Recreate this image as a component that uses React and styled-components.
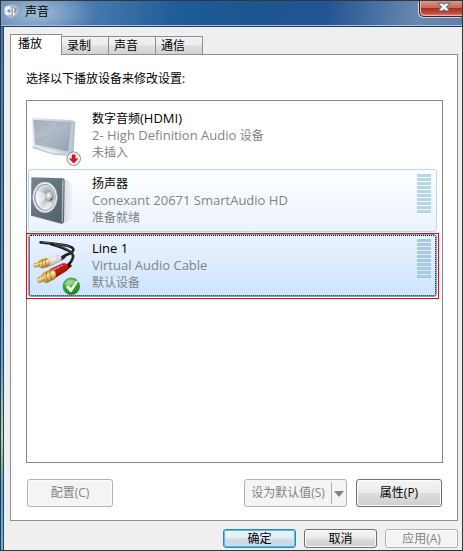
import React, { useState } from "react";
import styled, { createGlobalStyle, css } from "styled-components";

const GlobalStyle = createGlobalStyle`
  * { box-sizing: border-box; }
  body { margin: 0; background: #efefef; }
  button { font: inherit; padding: 0; margin: 0; }
`;

const Window = styled.div`
  display: flex;
  flex-direction: column;
  min-height: 100vh;
  border: 1px solid #363638;
  background: #efefef;
  color: #000;
  font-family: "Open Sans", "Noto Sans CJK SC", sans-serif;
  font-size: 12px;
  line-height: 16px;
`;

const TitleBar = styled.header`
  display: flex;
  justify-content: space-between;
  align-items: flex-start;
  height: 26px;
  border-bottom: 1px solid #1c3b66;
  box-shadow: inset 0 -1px 0 #a9c2df;
  background:
    radial-gradient(ellipse 58px 26px at 36px 12px, rgba(190, 208, 226, 0.75), rgba(160, 188, 215, 0.4) 60%, transparent),
    linear-gradient(100deg, #5d88b5 0%, #477aae 20%, #1f5c98 38%, #1b5590 55%, #205493 70%, #5478a8 84%, #6a88b0 90%, #5f80ac 100%);
`;

const Caption = styled.h1`
  display: flex;
  align-items: center;
  gap: 6px;
  height: 22px;
  margin: 0;
  padding-left: 2px;
  font-size: 12px;
  font-weight: 400;
`;

const CloseButton = styled.button`
  display: flex;
  align-items: center;
  justify-content: center;
  width: 43px;
  height: 16px;
  padding-left: 6px;
  padding-bottom: 3px;
  border: 1px solid #4a1d24;
  border-top: 0;
  border-right: 0;
  border-radius: 0 0 0 5px;
  background: linear-gradient(#d69a90 0, #c5675a 45%, #b02c1d 50%, #c24a38 80%, #e08a76 100%);
  box-shadow: inset 1px -1px 0 #e8b4a8, -1px 1px 0 #c8d2e2;
`;

const Frame = styled.div`
  display: flex;
  flex: 1;
  flex-direction: column;
  padding: 7px 4px 2px 6px;
  border-left: 1px solid #23415c;
  margin-left: 2px;
`;

const Body = styled.div`
  display: flex;
  flex: 1;
  flex-direction: column;
  background: linear-gradient(#3f7db4 0, #4f90c8 40%, #5ba5dc 64%, #b6d6b4 78%, #8ec58c 82%, #5ba5dc 88%, #63b4e8 100%) left / 2px 100% no-repeat;
`;

const TabList = styled.div`
  display: flex;
  align-items: flex-end;
`;

const Tab = styled.button`
  width: 47px;
  height: 18px;
  padding-left: 5px;
  border: 1px solid #8b8d97;
  border-bottom: 0;
  border-left-width: ${(p) => (p.$joined ? 0 : 1)}px;
  background: linear-gradient(#f3f3f3 0, #ececec 48%, #dedede 52%, #d2d2d2 100%);
  color: #000;
  text-align: left;
  line-height: 18px;
  ${(p) =>
    p.$active &&
    css`
      width: 52px;
      height: 21px;
      margin-bottom: -1px;
      padding-left: 7px;
      padding-bottom: 3px;
      border-left-width: 1px;
      background: #fff;
      z-index: 1;
    `}
`;

const Panel = styled.section`
  display: flex;
  flex: 1;
  flex-direction: column;
  padding: 16px 14px 13px 15px;
  border: 1px solid #8b8d97;
  background: #fff;
`;

const Prompt = styled.p`
  margin: 0 0 13px;
`;

const DeviceList = styled.ul`
  display: flex;
  flex: 1;
  flex-direction: column;
  gap: 2px;
  margin: 0;
  padding: 3px 5px 3px 1px;
  border: 1px solid #828790;
  list-style: none;
`;

const Device = styled.li`
  position: relative;
  display: flex;
  height: 63px;
  padding: 4px 5px 0 1px;
  border: 1px solid transparent;
  border-radius: 3px;
  cursor: default;
  ${(p) =>
    p.$look === "hover" &&
    css`
      border-color: #b8d6fb;
      background: linear-gradient(#fdfeff, #ebf3fd);
    `}
  ${(p) =>
    p.$look === "selected" &&
    css`
      border-color: #7da2ce;
      background: linear-gradient(#ebf3fe, #cde4fe);
      outline: 1px dotted #000;
      outline-offset: -2px;
      &::after {
        content: "";
        position: absolute;
        inset: -2px -3px -3px -3px;
        border: 1px solid #f00;
        pointer-events: none;
      }
    `}
`;

const DeviceIcon = styled.svg`
  flex: none;
  width: 54px;
  height: 57px;
`;

const DeviceText = styled.div`
  flex: 1;
  padding: 1px 0 0 8px;
  line-height: 17px;
  color: #838383;
`;

const DeviceName = styled.div`
  color: #000;
`;

const Latin = styled.span`
  font-size: 13px;
`;

const Meter = styled.div`
  display: flex;
  flex-direction: column;
  gap: 1px;
  width: 14px;
`;

const MeterBar = styled.span`
  height: 3px;
  background: ${(p) => (p.$deep ? "#a6cbdf" : "#b5d7e4")};
`;

const Actions = styled.div`
  display: flex;
  gap: 9px;
  margin-top: 16px;
  padding-right: 1px;
  padding-left: 1px;
`;

const buttonFace = css`
  border: 1px solid #707070;
  border-radius: 3px;
  background: linear-gradient(#f3f3f3 0, #ebebeb 48%, #dddddd 52%, #cfcfcf 100%);
  box-shadow: inset 0 0 0 1px #fbfbfb;
  color: #000;
  &:disabled {
    border-color: #adb2b5;
    background: #f4f4f4;
    color: #838383;
  }
`;

const ActionButton = styled.button`
  ${buttonFace}
  width: 86px;
  height: 28px;
  margin-right: ${(p) => (p.$pushes ? "auto" : 0)};
`;

const SplitButton = styled.div`
  display: flex;
  width: 103px;
  height: 28px;
  border: 1px solid #adb2b5;
  border-radius: 3px;
  background: #f4f4f4;
`;

const SplitPart = styled.button`
  flex: ${(p) => (p.$arrow ? "none" : 1)};
  width: ${(p) => (p.$arrow ? 15 : 0)}px;
  margin: 2px 0;
  border: 0;
  border-left: ${(p) => (p.$arrow ? "1px solid #adb2b5" : "0")};
  background: transparent;
  color: #838383;
  white-space: nowrap;
`;

const Footer = styled.footer`
  display: flex;
  justify-content: flex-end;
  gap: 8px;
  padding-top: 8px;
`;

const FooterButton = styled.button`
  ${buttonFace}
  width: 73px;
  height: 19px;
  line-height: 17px;
  ${(p) =>
    p.$primary &&
    css`
      border-color: #3c7fb1;
      background: linear-gradient(#eef5f9 0, #e2edf3 48%, #d0dde5 52%, #c8d8e2 100%);
      box-shadow: inset 0 0 0 1px #3fc8f4;
    `}
`;

const MonitorIcon = () => (
  <DeviceIcon viewBox="30 42 162 171" aria-hidden="true">
    <defs>
      <linearGradient id="screen" x1="0" y1="0" x2="1" y2="1">
        <stop offset="0" stopColor="#94a2b1" />
        <stop offset=".5" stopColor="#adb9c6" />
        <stop offset="1" stopColor="#93a2b2" />
      </linearGradient>
      <linearGradient id="bezel" x1="0" y1="0" x2="1" y2="0">
        <stop offset="0" stopColor="#e8eef1" />
        <stop offset="1" stopColor="#bdc8cf" />
      </linearGradient>
    </defs>
    <path d="M38 154l42-7 62 27-2 8-34-2-68-20z" fill="#dfe7ea" />
    <path d="M38 154l58 20 46 1v7l-40-2-64-20z" fill="#c4ced4" />
    <path d="M64 150l34 6v16l-38-12z" fill="#edf2f4" />
    <path d="M154 76l12 4-5 92-12 5z" fill="#b4c1c8" />
    <path d="M36 72q0-3 4-3l115 7q6 0 5 7l-8 91q-1 4-6 3L44 154q-4 0-4-5z" fill="url(#bezel)" stroke="#c9d3d8" />
    <path d="M41 75l111 8-8 85-98-20z" fill="url(#screen)" stroke="#8795a3" />
    <path d="M42 76l70 5q-15 45-67 50z" fill="#fff" opacity=".13" />
    <circle cx="161" cy="191" r="20" fill="#f5f5f5" stroke="#777" strokeWidth="3" />
    <circle cx="161" cy="191" r="17" fill="#e8e8e8" stroke="#fff" strokeWidth="2" />
    <path d="M156 179h10v12h8l-13 14-13-14h8z" fill="#d31820" stroke="#a90f18" />
  </DeviceIcon>
);

const SpeakerIcon = () => (
  <DeviceIcon viewBox="30 27 162 171" aria-hidden="true">
    <defs>
      <linearGradient id="box" x1="0" y1="0" x2="1" y2="1">
        <stop offset="0" stopColor="#77858e" />
        <stop offset="1" stopColor="#4d5c66" />
      </linearGradient>
      <linearGradient id="side" x1="0" y1="0" x2="1" y2="0">
        <stop offset="0" stopColor="#c4cdd3" />
        <stop offset="1" stopColor="#f7f9fb" />
      </linearGradient>
      <radialGradient id="cone" cx=".65" cy=".4" r=".75">
        <stop offset="0" stopColor="#8d969c" />
        <stop offset=".45" stopColor="#c6ccd0" />
        <stop offset="1" stopColor="#f2f4f5" />
      </radialGradient>
      <radialGradient id="cap" cx=".35" cy=".35" r=".7">
        <stop offset="0" stopColor="#fff" />
        <stop offset="1" stopColor="#838d94" />
      </radialGradient>
    </defs>
    <path d="M124 39l27 13q3 2 3 6v100q0 4-4 6l-26 13z" fill="url(#side)" stroke="#cbd5dc" />
    <path d="M134 55q13 50 2 112M145 60q8 50 0 98" fill="none" stroke="#dfe6ea" strokeWidth="3" />
    <path d="M34 37l92 3q8 0 8 7l-2 122q0 8-8 7l-91-24z" fill="url(#box)" />
    <path d="M126 43q5 1 5 6l-2 120q0 4-4 4z" fill="#a5b0b7" />
    <ellipse cx="75" cy="97" rx="37" ry="46" fill="#eef1f3" stroke="#aab3b9" strokeWidth="2" />
    <ellipse cx="75" cy="97" rx="32" ry="40" fill="#848f97" />
    <ellipse cx="76" cy="97" rx="29" ry="37" fill="url(#cone)" stroke="#dfe3e5" strokeWidth="2" />
    <path d="M85 92L50 76q-7 28 5 45z" fill="#fff" opacity=".55" />
    <path d="M88 98L72 133q14 2 24-12z" fill="#fff" opacity=".45" />
    <ellipse cx="89" cy="95" rx="12" ry="15" fill="url(#cap)" stroke="#78838b" />
    <circle cx="94" cy="103" r="3" fill="#4f5b63" />
    <path d="M34 153l89 25" stroke="#dbe0e4" strokeWidth="2" />
  </DeviceIcon>
);

const CableIcon = () => (
  <DeviceIcon viewBox="30 27 162 171" aria-hidden="true">
    <defs>
      <linearGradient id="gold" x1="0" y1="0" x2=".5" y2="1">
        <stop offset="0" stopColor="#f4d377" />
        <stop offset=".35" stopColor="#dba337" />
        <stop offset=".5" stopColor="#fff0ad" />
        <stop offset="1" stopColor="#a2690d" />
      </linearGradient>
      <linearGradient id="red" x1="0" y1="0" x2=".4" y2="1">
        <stop offset="0" stopColor="#f27769" />
        <stop offset=".4" stopColor="#cf1f18" />
        <stop offset="1" stopColor="#8f0907" />
      </linearGradient>
      <linearGradient id="white" x1="0" y1="0" x2=".3" y2="1">
        <stop offset="0" stopColor="#fff" />
        <stop offset=".5" stopColor="#e5e7ec" />
        <stop offset="1" stopColor="#9fa4ae" />
      </linearGradient>
      <radialGradient id="ok" cx=".4" cy=".25" r=".8">
        <stop offset="0" stopColor="#79d36a" />
        <stop offset=".6" stopColor="#32a52d" />
        <stop offset="1" stopColor="#137414" />
      </radialGradient>
    </defs>
    <path d="M62 37Q98 40 136 46q26 5 24 14-2 8-22 15l-10 6" fill="none" stroke="#202124" strokeWidth="8" strokeLinecap="round" />
    <path d="M66 36q46 3 84 14" fill="none" stroke="#777b80" strokeWidth="2" />
    <path d="M94 43q44 12 60 25 14 14-9 36" fill="none" stroke="#1b1b1e" strokeWidth="8" strokeLinecap="round" />
    <path d="M104 44q38 10 54 27 8 9-3 22" fill="none" stroke="#64666b" strokeWidth="2" />
    <path d="M117 84l15-9 5 8-16 11z" fill="#26262a" />
    <path d="M80 86l32-10q9-1 12 7 2 8-5 12L88 110q-11-7-8-24z" fill="url(#white)" stroke="#9297a1" />
    <path d="M108 78l7 18M114 77l7 16" stroke="#b8bcc4" strokeWidth="2" />
    <path d="M59 91l17-6q9-1 13 9 3 11-5 16l-17 5q-9 0-12-8-2-11 4-16z" fill="url(#gold)" stroke="#a37322" />
    <path d="M42 101l15-5 4 11-14 5q-6 0-7-4 0-5 2-7z" fill="url(#gold)" stroke="#a37322" />
    <path d="M68 89q-5 12 3 25M77 87q-5 11 3 23" fill="none" stroke="#8d5c16" strokeWidth="2" />
    <path d="M137 108l12-9 7 9-14 11z" fill="#3c0907" />
    <path d="M91 117l38-17q10-2 15 7 3 10-5 16l-39 24q-15-8-9-30z" fill="url(#red)" stroke="#82120e" />
    <path d="M99 120l30-14" stroke="#ffb1a6" strokeWidth="3" />
    <path d="M120 105l10 20M128 102l10 19" stroke="#8d100c" strokeWidth="2" />
    <path d="M71 128l21-10q10-1 15 11 3 13-5 19l-22 11q-11-1-15-12-2-12 6-19z" fill="url(#gold)" stroke="#9a6715" />
    <path d="M54 143l16-7 6 14-16 8q-6 0-8-6 0-7 2-9z" fill="url(#gold)" stroke="#9a6715" />
    <path d="M80 125q-6 14 5 31M91 119q-5 14 5 31" fill="none" stroke="#81520c" strokeWidth="2" />
    <circle cx="154" cy="169" r="25" fill="url(#ok)" stroke="#2c8a2b" strokeWidth="2" />
    <path d="M135 158q15-16 38-3-17 10-39 10z" fill="#fff" opacity=".3" />
    <path d="M138 170l6-5 9 9 15-21 9-2-23 36q-4 0-6-4z" fill="#fff" />
  </DeviceIcon>
);

const SoundGlyph = () => (
  <svg width="16" height="16" viewBox="9 10 48 48" aria-hidden="true">
    <path d="M13 20l11-8 22 1 10 10-2 16-17 14-13-2-11-15z" fill="#b5bec7" />
    <ellipse cx="24" cy="30" rx="12" ry="16" fill="#e5eaee" stroke="#8c969f" strokeWidth="2" />
    <path d="M15 21l13 10-10 10M29 17l-5 15 10 8" fill="none" stroke="#fff" strokeWidth="4" />
    <circle cx="27" cy="31" r="5" fill="#8995a1" />
    <path d="M38 18l13 7-8 10 5 6-10 9z" fill="#f4f6f7" stroke="#8c969f" strokeWidth="2" />
    <path d="M42 23l6 4-6 7" fill="none" stroke="#59636e" strokeWidth="3" />
  </svg>
);

const CloseGlyph = () => (
  <svg width="12" height="10" viewBox="0 0 12 10" aria-hidden="true">
    <path d="M1 1h3.5L6 2.6 7.500 1H11v1.400L8.400 5 11 7.600V9H7.500L6 7.400 4.500 9H1V7.600L3.600 5 1 2.400z" fill="#f7f7f7" stroke="#4e5467" />
  </svg>
);

const tabs = ["播放", "录制", "声音", "通信"];

const devices = [
  { name: <>数字音频<Latin>(HDMI)</Latin></>, detail: <><Latin>2- High Definition Audio </Latin>设备</>, status: "未插入", Icon: MonitorIcon, look: "plain" },
  { name: "扬声器", detail: <Latin>Conexant 20671 SmartAudio HD</Latin>, status: "准备就绪", Icon: SpeakerIcon, look: "hover", meter: true },
  { name: <Latin>Line 1</Latin>, detail: <Latin>Virtual Audio Cable</Latin>, status: "默认设备", Icon: CableIcon, look: "selected", meter: true },
];

const LevelMeter = ({ deep }) => (
  <Meter>
    {Array.from({ length: 10 }, (_, i) => (
      <MeterBar key={i} $deep={deep} />
    ))}
  </Meter>
);

export default function App() {
  const [active, setActive] = useState(0);
  return (
    <>
      <GlobalStyle />
      <Window>
        <TitleBar>
          <Caption>
            <SoundGlyph />
            声音
          </Caption>
          <CloseButton aria-label="关闭">
            <CloseGlyph />
          </CloseButton>
        </TitleBar>
        <Body>
          <Frame>
            <TabList role="tablist">
              {tabs.map((label, i) => (
                <Tab key={label} role="tab" aria-selected={i === active} $active={i === active} $joined={i > 0} onClick={() => setActive(i)}>
                  {label}
                </Tab>
              ))}
            </TabList>
            <Panel role="tabpanel">
              <Prompt>选择以下播放设备来修改设置:</Prompt>
              <DeviceList>
                {devices.map(({ name, detail, status, Icon, look, meter }) => (
                  <Device key={status} $look={look}>
                    <Icon />
                    <DeviceText>
                      <DeviceName>{name}</DeviceName>
                      <div>{detail}</div>
                      <div>{status}</div>
                    </DeviceText>
                    {meter && <LevelMeter deep={look === "selected"} />}
                  </Device>
                ))}
              </DeviceList>
              <Actions>
                <ActionButton disabled $pushes>配置(C)</ActionButton>
                <SplitButton>
                  <SplitPart disabled>设为默认值(S)</SplitPart>
                  <SplitPart disabled $arrow aria-label="更多">
                    <svg width="10" height="6" viewBox="0 0 10 6" aria-hidden="true">
                      <path d="M0 0h10L5 6z" fill="#838383" />
                    </svg>
                  </SplitPart>
                </SplitButton>
                <ActionButton>属性(P)</ActionButton>
              </Actions>
            </Panel>
            <Footer>
              <FooterButton $primary>确定</FooterButton>
              <FooterButton>取消</FooterButton>
              <FooterButton disabled>应用(A)</FooterButton>
            </Footer>
          </Frame>
        </Body>
      </Window>
    </>
  );
}
